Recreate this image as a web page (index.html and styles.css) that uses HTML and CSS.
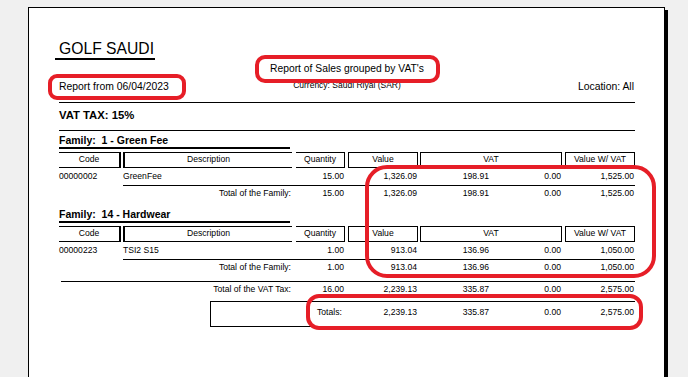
FILE: index.html
```html
<!DOCTYPE html>
<html>
<head>
<meta charset="utf-8">
<title>Report of Sales grouped by VAT's</title>
<link rel="stylesheet" href="styles.css">
</head>
<body>
<div class="page">
  <div class="company"><span class="company-name">GOLF SAUDI</span></div>
  <div class="info">
    <div class="info-left">Report from 06/04/2023</div>
    <div class="info-center">
      <div class="report-title">Report of Sales grouped by VAT's</div>
      <div class="currency">Currency: Saudi Riyal (SAR)</div>
    </div>
    <div class="info-right">Location: All</div>
  </div>
  <div class="vat-tax">VAT TAX: 15%</div>

  <section class="family">
    <div class="family-title">Family:&nbsp; 1 - Green Fee</div>
    <div class="grid head">
      <div class="h h-code">Code</div>
      <div class="h h-desc">Description</div>
      <div class="h h-qty">Quantity</div>
      <div class="h h-val">Value</div>
      <div class="h h-vat">VAT</div>
      <div class="h h-tot">Value W/ VAT</div>
    </div>
    <div class="grid row">
      <div class="c-code">00000002</div>
      <div class="c-desc">GreenFee</div>
      <div class="num c-qty">15.00</div>
      <div class="num c-val">1,326.09</div>
      <div class="num c-vat">198.91</div>
      <div class="num c-oth">0.00</div>
      <div class="num c-tot">1,525.00</div>
    </div>
    <div class="grid total">
      <div class="c-code blank"></div>
      <div class="c-label">Total of the Family:</div>
      <div class="num c-qty">15.00</div>
      <div class="num c-val">1,326.09</div>
      <div class="num c-vat">198.91</div>
      <div class="num c-oth">0.00</div>
      <div class="num c-tot">1,525.00</div>
    </div>
  </section>

  <section class="family">
    <div class="family-title">Family:&nbsp; 14 - Hardwear</div>
    <div class="grid head">
      <div class="h h-code">Code</div>
      <div class="h h-desc">Description</div>
      <div class="h h-qty">Quantity</div>
      <div class="h h-val">Value</div>
      <div class="h h-vat">VAT</div>
      <div class="h h-tot">Value W/ VAT</div>
    </div>
    <div class="grid row">
      <div class="c-code">00000223</div>
      <div class="c-desc">TSI2 S15</div>
      <div class="num c-qty">1.00</div>
      <div class="num c-val">913.04</div>
      <div class="num c-vat">136.96</div>
      <div class="num c-oth">0.00</div>
      <div class="num c-tot">1,050.00</div>
    </div>
    <div class="grid total">
      <div class="c-code blank"></div>
      <div class="c-label">Total of the Family:</div>
      <div class="num c-qty">1.00</div>
      <div class="num c-val">913.04</div>
      <div class="num c-vat">136.96</div>
      <div class="num c-oth">0.00</div>
      <div class="num c-tot">1,050.00</div>
    </div>
  </section>

  <div class="grid vat-total">
    <div class="c-code rule"></div>
    <div class="c-label">Total of the VAT Tax:</div>
    <div class="num c-qty">16.00</div>
    <div class="num c-val">2,239.13</div>
    <div class="num c-vat">335.87</div>
    <div class="num c-oth">0.00</div>
    <div class="num c-tot">2,575.00</div>
  </div>

  <div class="grid totals">
    <div class="totals-box"></div>
    <div class="totals-label">Totals:</div>
    <div class="num c-val">2,239.13</div>
    <div class="num c-vat">335.87</div>
    <div class="num c-oth">0.00</div>
    <div class="num c-tot">2,575.00</div>
  </div>
</div>

<div class="mark mark-date"></div>
<div class="mark mark-title"></div>
<div class="mark mark-data"></div>
<div class="mark mark-totals"></div>
</body>
</html>
```

FILE: styles.css
```css
html, body {
  margin: 0;
  padding: 0;
}

html {
  overflow: hidden;
}

body {
  background: #f0f0f0;
  padding: 7px 0 0 28px;
  font-family: "Liberation Sans", Arial, sans-serif;
  color: #000;
  overflow: hidden;
  height: 377px;
  box-sizing: border-box;
}

.page {
  width: 576px;
  height: 337px;
  padding: 32px 29px 0 30px;
  background: #fff;
  border: 1px solid #000;
  border-bottom: none;
  box-shadow: 3px 3px 0 #000;
}

.company {
  height: 20px;
}

.company-name {
  display: inline-block;
  font-size: 15.7px;
  line-height: 18px;
  margin-left: -4px;
  padding: 0 1px 0 4px;
  border-bottom: 2px solid #000;
}

.info {
  display: grid;
  grid-template-columns: 1fr auto 1fr;
  padding-bottom: 9px;
  border-bottom: 1px solid #000;
}

.info-left,
.info-right {
  font-size: 10.4px;
  line-height: 12px;
  padding-top: 21px;
}

.info-right {
  justify-self: end;
  padding-right: 1px;
}

.info-center {
  text-align: center;
}

.report-title {
  font-size: 10.3px;
  line-height: 12px;
  margin-top: 3px;
}

.currency {
  font-size: 8.5px;
  line-height: 12px;
  margin-top: 4px;
}

.vat-tax {
  font-size: 11.3px;
  font-weight: bold;
  line-height: 14px;
  padding: 5px 0 8px;
  border-bottom: 1px solid #000;
}

.family {
  margin-top: 3px;
}

.family + .family {
  margin-top: 8px;
}

.family-title {
  width: 231px;
  font-size: 10.5px;
  font-weight: bold;
  line-height: 13px;
  border-bottom: 2px solid #000;
}

.grid {
  display: grid;
  grid-template-columns: 64px 173px 52px 72px 70px 75px 70px;
  font-size: 8.6px;
}

.head {
  margin-top: 3px;
}

.h {
  text-align: center;
  line-height: 13px;
  padding-bottom: 1px;
  border-top: 1px solid #000;
  border-bottom: 1px solid #000;
}

.h-code {
  margin-right: 2px;
  border-right: 2px solid #000;
}

.h-desc {
  margin-right: 4px;
  border-left: 2px solid #000;
}

.h-qty {
  margin-right: 3px;
  border-right: 1px solid #000;
}

.h-val {
  margin-right: 2px;
  border-left: 1px solid #000;
  border-right: 1px solid #000;
}

.h-vat {
  grid-column: 5 / 7;
  margin-right: 3px;
  border-left: 1px solid #000;
  border-right: 1px solid #000;
}

.h-tot {
  border-left: 1px solid #000;
  border-right: 1px solid #000;
}

.row > div {
  line-height: 17px;
  white-space: nowrap;
}

.num {
  text-align: right;
  white-space: nowrap;
}

.c-qty { padding-right: 4px; }
.c-val { padding-right: 3px; }
.c-vat { padding-right: 1px; }
.c-oth { padding-right: 4px; }
.c-tot { padding-right: 1px; }

.c-label {
  text-align: right;
  padding-right: 5px;
  white-space: nowrap;
}

.total > div {
  line-height: 14px;
  border-top: 1px solid #000;
}

.total > .blank {
  border-top: none;
}

.vat-total {
  margin-top: 7px;
}

.vat-total > div {
  line-height: 14px;
  border-top: 1px solid #000;
}

.vat-total > .rule {
  margin-left: 2px;
}

.totals {
  margin-top: 5px;
}

.totals > div {
  grid-row: 1;
  line-height: 14px;
  padding-top: 4px;
}

.totals-box {
  grid-column: 2 / 8;
  margin-left: 87px;
  height: 26px;
  box-sizing: border-box;
  border: 1px solid #000;
  border-right: none;
}

.totals > .totals-box {
  padding-top: 0;
}

.totals-label {
  grid-column: 3;
  padding-left: 21px;
}

.totals > .c-val { grid-column: 4; }
.totals > .c-vat { grid-column: 5; }
.totals > .c-oth { grid-column: 6; }
.totals > .c-tot { grid-column: 7; }

.mark {
  position: absolute;
  box-sizing: border-box;
  border: 4px solid #e61e27;
}

.mark-date {
  left: 48px;
  top: 74px;
  width: 138px;
  height: 26px;
  border-radius: 9px;
}

.mark-title {
  left: 255px;
  top: 55px;
  width: 185px;
  height: 28px;
  border-radius: 10px;
}

.mark-data {
  left: 365px;
  top: 165px;
  width: 291px;
  height: 113px;
  border-radius: 22px;
}

.mark-totals {
  left: 306px;
  top: 294px;
  width: 337px;
  height: 36px;
  border-radius: 13px;
}
```
